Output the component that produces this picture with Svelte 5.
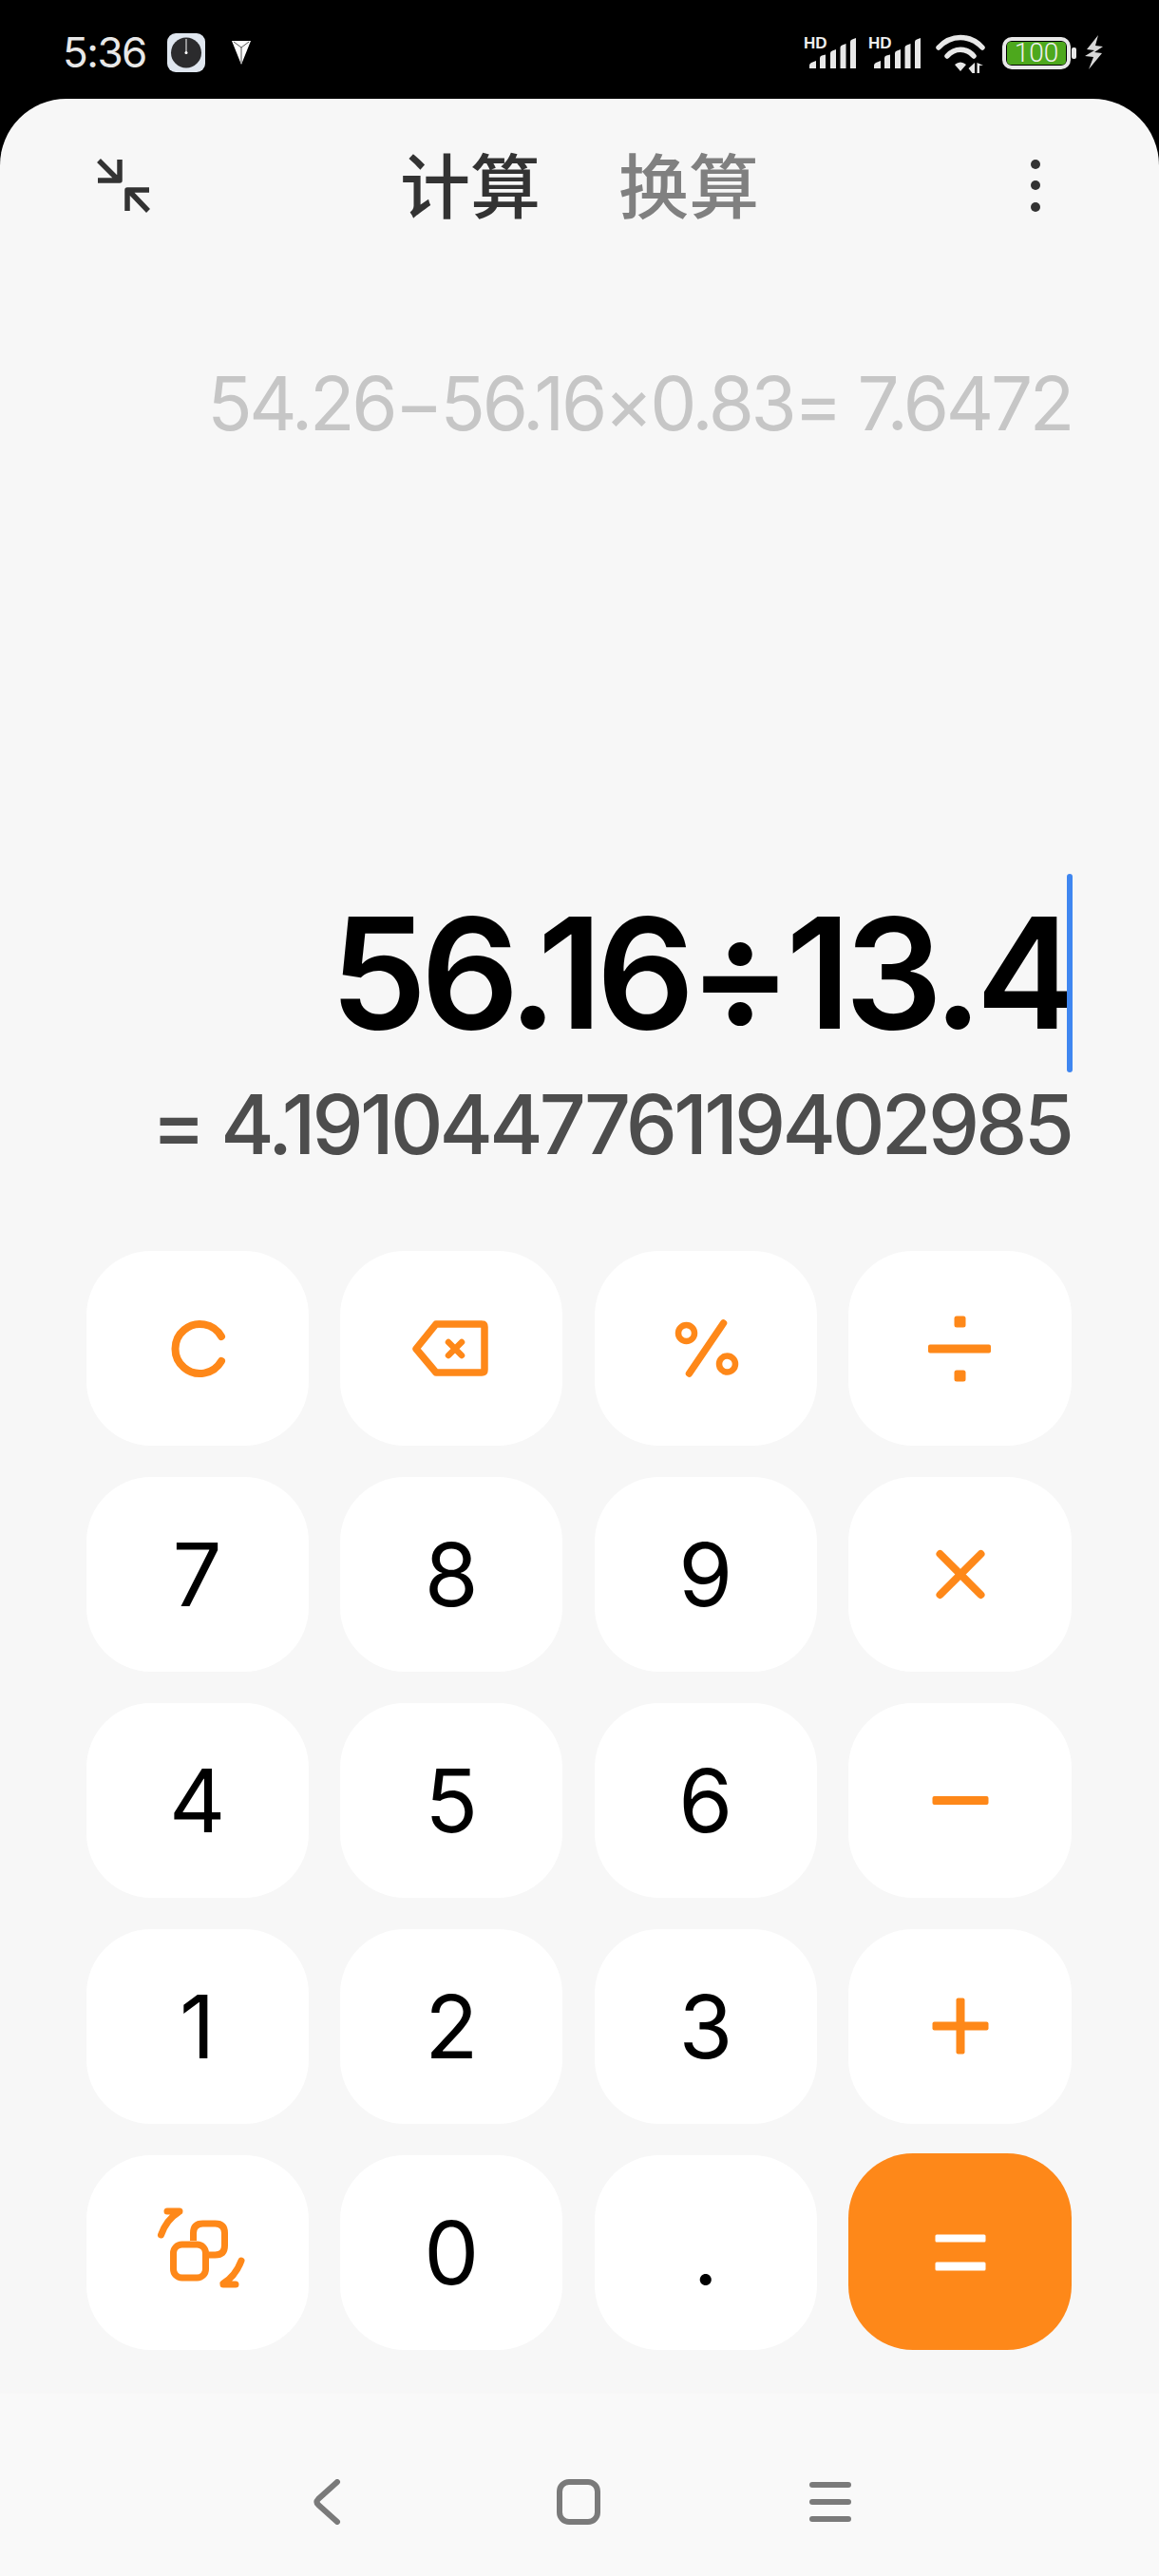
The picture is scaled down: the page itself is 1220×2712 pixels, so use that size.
<script>
  const rows = [
    [{ k: 'c' }, { k: 'back' }, { k: 'pct' }, { k: 'div' }],
    [{ t: '7' }, { t: '8' }, { t: '9' }, { k: 'mul' }],
    [{ t: '4' }, { t: '5' }, { t: '6' }, { k: 'minus' }],
    [{ t: '1' }, { t: '2' }, { t: '3' }, { k: 'plus' }],
    [{ k: 'swap' }, { t: '0' }, { t: '.' }, { k: 'eq' }]
  ];
  const keys = rows.flat();
</script>

<div class="screen">
  <header class="status">
    <div class="status-left">
      <span class="time">5:36</span>
      <svg class="clock" width="40" height="41" viewBox="0 0 40 41">
        <rect width="40" height="41" rx="9" fill="#dfe6ef" />
        <circle cx="20" cy="20.5" r="16" fill="#2b2b2d" />
        <path d="M20 6v14" stroke="#fff" stroke-width="1" />
        <circle cx="20" cy="20.5" r="1.5" fill="#fff" />
      </svg>
      <svg class="arrowhead" width="20" height="26" viewBox="0 0 20 26">
        <path d="M0 1H20L10 26Z" fill="#fff" />
        <path d="M2 2L10 8L18 2M10 8V24" fill="none" stroke="#555" stroke-width="1" />
      </svg>
    </div>
    <div class="status-right">
      {#each [0, 1] as s (s)}
        <div class="signal">
          <span class="hd">HD</span>
          <svg width="58" height="38" viewBox="0 0 58 38">
            <path d="M6 38v-3q0-2 2-3l5-2v8zM17 38V27q0-2 2-2.500l4-1v14.500zM28 38V22q0-2 2-2.500l4-1.500v20zM38.500 38V16q0-2 2-2.500l4-1.500v26zM49 38V10q0-2 2-2.500l4-1.500v32z" fill="#e8e8e8" />
          </svg>
        </div>
      {/each}
      <svg class="wifi" width="52" height="44" viewBox="0 0 52 44">
        <path d="M3 15C16 1 36 1 49 15M12 24C20 15 32 15 40 24" fill="none" stroke="#e8e8e8" stroke-width="5.500" stroke-linecap="round" />
        <path d="M20 33Q26 28 32 33L26 40Z" fill="#e8e8e8" />
        <path d="M41 31v11h-2.500l-4-5zM43.500 31v11h2.500v-8h4z" fill="#e8e8e8" />
      </svg>
      <div class="battery">
        <div class="batt-shell"><span class="batt-fill">100</span></div>
        <i class="batt-tip"></i>
      </div>
      <svg class="bolt" width="20" height="36" viewBox="0 0 20 36">
        <path d="M14 0L2 15l8 1-10 6 9 1-5 13 14-17-8-1 9-6-8-1z" fill="#d8d8d8" />
      </svg>
    </div>
  </header>

  <main class="card">
    <nav class="top">
      <svg class="shrink" width="60" height="60" viewBox="0 0 60 60">
        <path d="M4 4L25 25M26 3V25H3M56 57L35 35M34 57V35H57" fill="none" stroke="#333" stroke-width="5.500" stroke-linejoin="round" />
      </svg>
      <div class="tabs">
        <span class="tab on">计算</span>
        <span class="tab">换算</span>
      </div>
      <div class="more"><i></i><i></i><i></i></div>
    </nav>

    <div class="history">54.26−56.16×0.83= 7.6472</div>

    <div class="expr-row">
      <span class="expr">56.16÷13.4</span>
      <i class="caret"></i>
    </div>
    <div class="result">= 4.191044776119402985</div>

    <div class="pad">
      {#each keys as key, i (i)}
        <button class="key" class:eq={key.k === 'eq'}>
          {#if key.t}
            <span class="digit">{key.t}</span>
          {:else}
            <svg class="ic" width="100" height="100" viewBox="0 0 100 100">
              {#if key.k === 'c'}
                <path d="M75 37A26 26 0 1 0 75 63" fill="none" stroke="#fe8819" stroke-width="8" stroke-linecap="round" />
              {:else if key.k === 'back'}
                <path d="M34 24H82Q85 24 85 27V72Q85 75 82 75H34L13 50Z" fill="none" stroke="#fe8819" stroke-width="7.500" stroke-linejoin="round" />
                <path d="M47 43L61 57M61 43L47 57" stroke="#fe8819" stroke-width="6.500" stroke-linecap="round" />
              {:else if key.k === 'pct'}
                <circle cx="29.500" cy="33.500" r="8.500" fill="none" stroke="#fe8819" stroke-width="6.500" />
                <circle cx="72.500" cy="66" r="8.500" fill="none" stroke="#fe8819" stroke-width="6.500" />
                <path d="M68.500 23L32.500 76" stroke="#fe8819" stroke-width="7.500" stroke-linecap="round" />
              {:else if key.k === 'div'}
                <rect x="17" y="45.500" width="66" height="9" rx="2" fill="#fe8819" />
                <rect x="44.500" y="15.500" width="12" height="12" rx="2.500" fill="#fe8819" />
                <rect x="44.500" y="72.500" width="12" height="12" rx="2.500" fill="#fe8819" />
              {:else if key.k === 'mul'}
                <path d="M29.500 28L72.500 71M72.500 28L29.500 71" stroke="#fe8819" stroke-width="8" stroke-linecap="round" />
              {:else if key.k === 'minus'}
                <rect x="21.500" y="45" width="59" height="9" rx="2" fill="#fe8819" />
              {:else if key.k === 'plus'}
                <rect x="21.500" y="44.500" width="59" height="9" rx="2" fill="#fe8819" />
                <rect x="46.500" y="19.500" width="9" height="59" rx="2" fill="#fe8819" />
              {:else if key.k === 'swap'}
                <path d="M45.500 37V29Q45.500 19 55.500 19H68.500Q78.500 19 78.500 29V42Q78.500 52 68.500 52H62" fill="none" stroke="#fe8819" stroke-width="7" />
                <rect x="24.500" y="41" width="34" height="35" rx="9" fill="none" stroke="#fe8819" stroke-width="7" />
                <path d="M11.500 31Q17 15 30 7M18 6H31M96 58Q90 74 77 82M77 83H90" fill="none" stroke="#fe8819" stroke-width="7" stroke-linecap="round" />
              {:else if key.k === 'eq'}
                <rect x="24.500" y="30.500" width="53" height="8" rx="1.500" fill="#fff" />
                <rect x="24.500" y="59.500" width="53" height="9" rx="1.500" fill="#fff" />
              {/if}
            </svg>
          {/if}
        </button>
      {/each}
    </div>

    <footer class="nav">
      <svg width="30" height="48" viewBox="0 0 30 48">
        <path d="M26 3L6 21Q3 24 6 27L26 45" fill="none" stroke="#7a7a7a" stroke-width="6" stroke-linecap="round" />
      </svg>
      <svg class="home" width="46" height="48" viewBox="0 0 46 48">
        <rect x="3" y="3" width="40" height="42" rx="10" fill="none" stroke="#7a7a7a" stroke-width="6" />
      </svg>
      <div class="menu"><i></i><i></i><i></i></div>
    </footer>
  </main>
</div>

<style>
  :global(body) {
    margin: 0;
    background: #000;
  }
  .screen {
    width: 1220px;
    height: 2712px;
    display: flex;
    flex-direction: column;
    overflow: hidden;
    font-family: "Inter", "Noto Sans CJK SC", sans-serif;
  }
  .status {
    height: 104px;
    flex: none;
    display: flex;
    justify-content: space-between;
    align-items: flex-start;
    padding: 0 58px 0 66px;
    box-sizing: border-box;
    color: #e8e8e8;
  }
  .status-left {
    display: flex;
    align-items: center;
    height: 110px;
  }
  .time {
    font-size: 44px;
    line-height: 1;
    width: 110px;
    letter-spacing: -1.500px;
  }
  .arrowhead { margin-left: 28px; }
  .status-right {
    display: flex;
    align-items: center;
    height: 110px;
  }
  .signal {
    position: relative;
    width: 58px;
    height: 38px;
    margin: 0 10px 4px 0;
  }
  .signal svg {
    display: block;
  }
  .hd {
    position: absolute;
    left: 0;
    top: 3px;
    font: 700 17px/1 "Liberation Sans", sans-serif;
    color: #eee;
  }
  .wifi { margin: 4px 0 0 3px; }
  .battery {
    display: flex;
    align-items: center;
    margin: 2px 0 0 18px;
  }
  .batt-shell {
    width: 72px;
    height: 34px;
    box-sizing: border-box;
    border: 4px solid #e8e8e8;
    border-radius: 10px;
    padding: 1px;
    display: flex;
  }
  .batt-fill {
    flex: 1;
    background: #4da81d;
    border-radius: 4px;
    color: #f0f0f0;
    font: 300 28px/24px "Roboto", sans-serif;
    text-align: center;
  }
  .batt-tip {
    width: 5px;
    height: 12px;
    background: #e8e8e8;
    border-radius: 2px;
    margin-left: 1px;
  }
  .bolt { margin-left: 9px; }
  .card {
    flex: 1;
    background: #f7f7f7;
    border-radius: 70px 70px 0 0;
    display: flex;
    flex-direction: column;
    min-height: 0;
  }
  .top {
    height: 182px;
    flex: none;
    display: grid;
    grid-template-columns: 1fr auto 1fr;
    align-items: center;
    padding: 0 100px;
    box-sizing: border-box;
  }
  .tabs {
    display: flex;
    gap: 82px;
    font-family: "Noto Sans CJK SC", sans-serif;
    font-size: 74px;
    line-height: 1;
    font-weight: 500;
    margin-bottom: 6px;
  }
  .tab { color: #808080; }
  .tab.on { color: #333; }
  .more {
    justify-self: end;
    margin-right: 25px;
    display: flex;
    flex-direction: column;
    gap: 12.500px;
  }
  .more i {
    display: block;
    width: 10px;
    height: 10px;
    border-radius: 50%;
    background: #333;
  }
  .history {
    margin-top: 89px;
    padding-right: 92px;
    text-align: right;
    font-size: 78px;
    line-height: 100px;
    letter-spacing: -3.300px;
    color: #c6c6c6;
    white-space: nowrap;
  }
  .expr-row {
    height: 209px;
    flex: none;
    margin-top: 445px;
    display: flex;
    justify-content: flex-end;
    align-items: center;
    padding-right: 91px;
    position: relative;
  }
  .expr {
    font-size: 162px;
    font-weight: 600;
    line-height: 209px;
    color: #000;
    letter-spacing: -6.500px;
  }
  .caret {
    position: absolute;
    right: 91px;
    top: 0;
    width: 6px;
    height: 209px;
    border-radius: 3px;
    background: #3f86f0;
  }
  .result {
    padding-right: 93px;
    text-align: right;
    font-size: 86px;
    line-height: 110px;
    font-weight: 500;
    color: #4d4d4d;
    white-space: nowrap;
    letter-spacing: -3.800px;
  }
  .pad {
    display: grid;
    flex: none;
    grid-template-columns: repeat(4, 234.300px);
    grid-auto-rows: 205px;
    column-gap: 33.300px;
    row-gap: 33px;
    margin: 78px 0 0 90.500px;
  }
  .key {
    border: 0;
    padding: 0;
    background: #fff;
    border-radius: 68px;
    display: flex;
    align-items: center;
    justify-content: center;
    color: #000;
    font-family: inherit;
  }
  .key.eq {
    background: #fe8819;
    margin-top: -2px;
    padding-top: 2px;
  }
  .digit {
    font-size: 92px;
    line-height: 1;
    font-weight: 400;
  }
  .nav {
    margin-top: 46px;
    flex: 1;
    display: flex;
    align-items: flex-start;
    padding: 90px 0 0 329px;
    gap: 220px;
    background: #f9f9f9;
  }
  .home { margin-left: 7px; }
  .menu {
    display: flex;
    flex-direction: column;
    gap: 12px;
    padding-top: 3px;
  }
  .menu i {
    display: block;
    width: 44px;
    height: 6px;
    border-radius: 3px;
    background: #7a7a7a;
  }
</style>
